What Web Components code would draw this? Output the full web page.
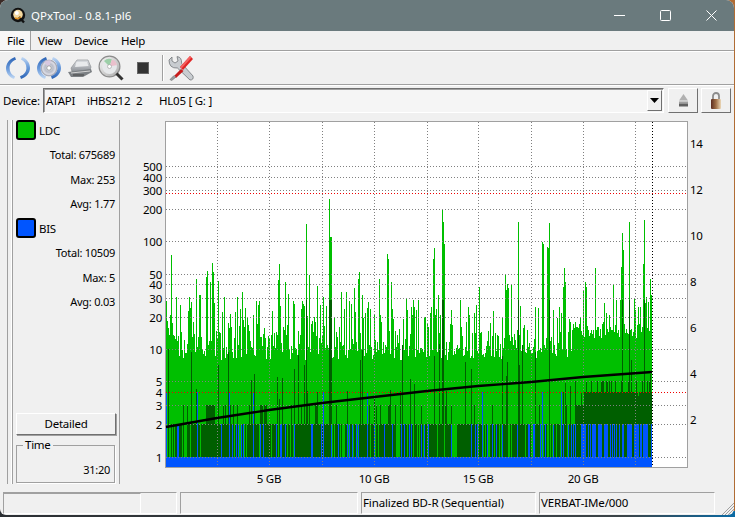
<!DOCTYPE html>
<html>
<head>
<meta charset="utf-8">
<title>QPxTool</title>
<style>
html, body { margin: 0; height: 100%; overflow: hidden; }
html { background: linear-gradient(90deg, #3a2a26, #4a5558 50%, #b06c34); }
body { background: linear-gradient(90deg, #2c3034 0, #3c4448 85%, #0a6aa4 100%) bottom / 100% 6px no-repeat; font: 11px "Noto Sans", sans-serif; color: #000; }
</style>
</head>
<body>
<qp-window>
    <qp-titlebar slot="top" text="QPxTool - 0.8.1-pl6"></qp-titlebar>
    <qp-menubar slot="top"></qp-menubar>
    <qp-toolbar slot="top"></qp-toolbar>
    <qp-devicebar slot="top"></qp-devicebar>
    <qp-sidepanel slot="side"></qp-sidepanel>
    <qp-chart slot="main"></qp-chart>
    <qp-statusbar slot="bottom"></qp-statusbar>
</qp-window>

<script>
const UI = 'font: 11px "Noto Sans", sans-serif; letter-spacing: -0.25px;'
const RAISED = 'border: 1px solid; border-color: #fff #707070 #707070 #fff;'

class Base extends HTMLElement {
    constructor () {
        super()
        this.root = this.attachShadow({ mode: 'open' })
    }
    connectedCallback () {
        this.root.innerHTML = this.render()
    }
}

customElements.define('qp-window', class extends Base {
    render () {
        return `<style>
        :host { display: flex; flex-direction: column; width: 734px; height: 515px; background: #f0f0f0; border-radius: 8px 8px 6px 6px; overflow: hidden; }
        .mid { flex: 1; display: flex; min-height: 0; }
        </style>
        <slot name="top"></slot>
        <div class="mid"><slot name="side"></slot><slot name="main"></slot></div>
        <slot name="bottom"></slot>`
    }
})

customElements.define('qp-titlebar', class extends Base {
    render () {
        return `<style>
        :host { display: flex; align-items: center; height: 31px; background: #6a7a7d; color: #fff; font: 11.5px "Noto Sans", sans-serif; }
        .ico { margin: 0 5px 0 10px; display: block; }
        .text { flex: 1; }
        .btn { width: 46px; height: 31px; display: flex; align-items: center; justify-content: center; }
        svg { display: block; }
        </style>
        <svg class="ico" width="16" height="17" viewBox="0 0 16 17">
            <circle cx="8" cy="8" r="7.2" fill="#111"/>
            <circle cx="8" cy="7.6" r="4.8" fill="#f4d9a0"/>
            <circle cx="6.8" cy="6" r="2" fill="#fff"/>
            <path d="M9 10 L14 15.5" stroke="#111" stroke-width="2.4"/>
            <path d="M5 11 Q8 12.5 11 10" stroke="#e09020" stroke-width="1.4" fill="none"/>
        </svg>
        <span class="text">${this.getAttribute('text')}</span>
        <div class="btn"><svg width="11" height="11"><path d="M0 5.5H11" stroke="#fff"/></svg></div>
        <div class="btn"><svg width="11" height="11"><rect x=".5" y=".5" width="10" height="10" rx="1" fill="none" stroke="#fff"/></svg></div>
        <div class="btn"><svg width="11" height="11"><path d="M.5 .5L10.5 10.5M10.5 .5L.5 10.5" stroke="#fff"/></svg></div>`
    }
})

customElements.define('qp-menubar', class extends Base {
    render () {
        return `<style>
        :host { display: flex; height: 19px; border-bottom: 1px solid #a0a0a0; box-shadow: 0 1px 0 #fff; background: #f0f0f0; ${UI} }
        span { flex: none; box-sizing: border-box; padding-left: 7px; line-height: 19px; font-size: 11.5px; }
        .on { width: 31px; background: #f7f7f7; border-right: 1px solid #a0a0a0; }
        </style>
        <span class="on">File</span><span style="width:36px">View</span><span style="width:47px">Device</span><span>Help</span>`
    }
})

customElements.define('qp-toolbar', class extends Base {
    arc (id) {
        return `<path d="M9 1 C3 3 0 8 0 12 C0 17 3 21 8 23 L9 20.5 C5.5 19 3.6 16 3.6 12 C3.6 8 6 5.2 10 3.8 Z" fill="url(#${id})"/>
        <path d="M9 1 C3 3 0 8 0 12 C0 17 3 21 8 23 L9 20.5 C5.5 19 3.6 16 3.6 12 C3.6 8 6 5.2 10 3.8 Z" fill="url(#${id})" transform="rotate(180 12 12)"/>`
    }
    render () {
        return `<style>
        :host { display: flex; align-items: center; height: 33px; margin-top: 1px; border-bottom: 1px solid #a0a0a0; box-shadow: 0 1px 0 #fff; background: #f0f0f0; padding-left: 6px; box-sizing: border-box; }
        svg { display: block; flex: none; }
        .sep { width: 1px; height: 26px; background: #a0a0a0; box-shadow: 1px 0 0 #fff; margin: 0 5px 0 13px; }
        </style>
        <svg width="0" height="0" style="position:absolute"><defs>
            <linearGradient id="a1" x1="0" y1="0" x2="0" y2="1"><stop offset="0" stop-color="#2a62b4"/><stop offset=".55" stop-color="#6c9cdc"/><stop offset="1" stop-color="#c4daf4"/></linearGradient>
            <radialGradient id="cd"><stop offset="0" stop-color="#f4f4f8"/><stop offset=".5" stop-color="#b8bcc8"/><stop offset=".8" stop-color="#dcdce4"/><stop offset="1" stop-color="#a0a4b0"/></radialGradient>
            <linearGradient id="tr" x1="0" y1="0" x2="0" y2="1"><stop offset="0" stop-color="#dfe2e6"/><stop offset="1" stop-color="#8a8e94"/></linearGradient>
            <linearGradient id="ls" x1="0" y1="0" x2="1" y2="1"><stop offset="0" stop-color="#f8f8f8"/><stop offset="1" stop-color="#a8a8a8"/></linearGradient>
        </defs></svg>
        <svg width="24" height="24" style="margin-right:7px">${this.arc('a1')}</svg>
        <svg width="24" height="24" style="margin-right:7px">
            <circle cx="12" cy="12" r="8" fill="url(#cd)" stroke="#9a9aa8" stroke-width=".6"/>
            <path d="M12 12 L7 6 A8 8 0 0 1 14 4.4 Z" fill="#d8c8e0"/>
            <circle cx="12" cy="12" r="2.2" fill="#fff" stroke="#777" stroke-width=".6"/>
            ${this.arc('a1')}
        </svg>
        <svg width="24" height="22" viewBox="0 0 24 22" style="margin-right:6px">
            <path d="M3 11 L9 3 L20 3 L23 10 L22 13 L4 15 Z" fill="url(#tr)" stroke="#84888c" stroke-width=".6"/>
            <path d="M8.5 5 L19 5 L20.5 9 L7 10 Z" fill="#e8eaec"/>
            <path d="M0 15 L23 12 L24 15 L15 20 L3 20 Z" fill="#7c8084"/>
            <path d="M3 16 L22 14" stroke="#d4d4d4"/>
            <path d="M5 18 L16 18" stroke="#444" stroke-width="1.2"/>
        </svg>
        <svg width="26" height="26" viewBox="0 0 26 26">
            <circle cx="11.5" cy="11.5" r="10.4" fill="url(#ls)" stroke="#8c8c8c" stroke-width="1.2"/>
            <circle cx="11.5" cy="11.5" r="7.4" fill="#e6e8ea"/>
            <path d="M11.5 11.5 L6 6 A7.6 7.6 0 0 1 14 4.4 Z" fill="#9ccfa8"/>
            <path d="M11.5 11.5 L14 4.4 A7.6 7.6 0 0 1 19 10 Z" fill="#eac0cc"/>
            <circle cx="11.5" cy="11.5" r="2" fill="#fff" stroke="#999" stroke-width=".6"/>
            <path d="M18.5 18.5 L24.5 24.5" stroke="#333" stroke-width="3"/>
        </svg>
        <svg width="12" height="12" style="margin-left:13px"><rect x=".5" y=".5" width="11" height="11" fill="#333" stroke="#666"/></svg>
        <div class="sep"></div>
        <svg width="26" height="26" viewBox="0 0 26 26">
            <path d="M1 5 L4 2 L4 6 L7 8 L10 6 L9 1.6 Q14 2 13.6 8.4 L25 21 Q26 25 22 25 L9.4 13 Q1 13.6 1 5Z" fill="#c8ccd0" stroke="#72767a" stroke-width=".8"/>
            <path d="M22 1 L25 4 L15 15 L12 12 Z" fill="#e02424"/>
            <path d="M22 1 L23.5 2.5 L13.5 13.5 L12 12 Z" fill="#f46060"/>
            <path d="M13 14 L6 21 L8 23 L15.5 16 Z" fill="#c81c1c"/>
            <path d="M6 20.5 L2 24.5 L3.6 25.6 L8 22" fill="#9a9ea2" stroke="#666" stroke-width=".6"/>
        </svg>`
    }
})

customElements.define('qp-devicebar', class extends Base {
    render () {
        return `<style>
        :host { display: flex; align-items: center; height: 31px; padding: 3px 3px 3px 3px; box-sizing: border-box; ${UI} font-size: 11.5px; }
        .lab { width: 40px; }
        .combo { width: 621px; height: 25px; box-sizing: border-box; border: 1px solid; border-color: #707070 #fff #fff #707070; box-shadow: inset 1px 1px 0 #a0a0a0; background: #f5f5f5; display: flex; align-items: center; padding-left: 2px; }
        .txt { flex: 1; display: flex; }
        .txt span { flex: none; }
        .arrow { width: 15px; height: 21px; box-sizing: border-box; background: #f0f0f0; ${RAISED} margin: 0 1px; display: flex; align-items: center; justify-content: center; }
        .btn { width: 30px; height: 25px; box-sizing: border-box; background: #f0f0f0; ${RAISED} display: flex; align-items: center; justify-content: center; }
        svg { display: block; }
        </style>
        <span class="lab">Device:</span>
        <div class="combo"><div class="txt"><span style="width:41px">ATAPI</span><span style="width:49px">iHBS212</span><span style="width:23px">2</span><span>HL05 [ G: ]</span></div>
            <div class="arrow"><svg width="9" height="5"><path d="M0 0H9L4.5 5Z" fill="#000"/></svg></div></div>
        <div class="btn" style="margin-left:4px"><svg width="11" height="13"><path d="M5.5 0L10 6.5H1Z" fill="#b0b0b0"/><rect x="1" y="7.5" width="9" height="2" fill="#a0a0a0"/><rect x="1" y="9.5" width="9" height="3" fill="#606060"/></svg></div>
        <div class="btn" style="margin-left:3px"><svg width="12" height="17">
            <defs><linearGradient id="lk"><stop offset="0" stop-color="#5c2c20"/><stop offset=".5" stop-color="#a07048"/><stop offset="1" stop-color="#ecd8b8"/></linearGradient></defs>
            <path d="M3 8V4a3 3 0 0 1 6 0V8" fill="none" stroke="#8c8c8c" stroke-width="1.8"/><rect x="1" y="7" width="10" height="10" rx="1" fill="url(#lk)"/></svg></div>`
    }
})

customElements.define('qp-legend', class extends Base {
    render () {
        return `<style>
        :host { display: flex; align-items: center; height: 20px; padding-left: 3px; font-size: 11.5px; }
        i { width: 20px; height: 20px; box-sizing: border-box; border: 2px solid #000; border-radius: 3px; background: ${this.getAttribute('color')}; margin-right: 3px; }
        </style><i></i><slot></slot>`
    }
})

customElements.define('qp-stat', class extends Base {
    render () {
        return `<style>
        :host { display: block; height: 24.5px; line-height: 24.5px; text-align: right; padding-right: 4px; }
        </style><slot></slot>`
    }
})

customElements.define('qp-sidepanel', class extends Base {
    render () {
        return `<style>
        :host { display: block; width: 113px; flex: none; margin: 4px 0 7px 7px; border-left: 1px solid #a0a0a0; ${UI} }
        .in { height: 100%; margin-left: 4px; border-left: 1px solid #a0a0a0; box-shadow: -1px 0 0 #fff; border-right: 1px solid #a0a0a0; box-sizing: border-box; display: flex; flex-direction: column; width: 108px; }
        .spc { flex: 1; }
        .stats { padding-top: 3px; height: 78px; box-sizing: border-box; }
        .det { height: 22px; margin: 0 3px 10px 3px; box-sizing: border-box; background: #f0f0f0; ${RAISED} box-shadow: 1px 1px 0 #a0a0a0; text-align: center; line-height: 20px; font-size: 11.5px; }
        .time { position: relative; height: 38px; margin: 0 4px 1px 3px; border: 1px solid #a0a0a0; box-sizing: border-box; box-shadow: 1px 1px 0 #fff; text-align: right; padding: 15px 4px 0 0; line-height: 18px; }
        .time b { position: absolute; left: 6px; top: -9px; font-weight: normal; font-size: 11.5px; background: #f0f0f0; padding: 0 2px; line-height: 16px; }
        </style>
        <div class="in">
            <qp-legend color="#00bf00">LDC</qp-legend>
            <div class="stats"><qp-stat>Total: 675689</qp-stat><qp-stat>Max: 253</qp-stat><qp-stat>Avg: 1.77</qp-stat></div>
            <qp-legend color="#0055ff">BIS</qp-legend>
            <div class="stats"><qp-stat>Total: 10509</qp-stat><qp-stat>Max: 5</qp-stat><qp-stat>Avg: 0.03</qp-stat></div>
            <div class="spc"></div>
            <div class="det">Detailed</div>
            <div class="time"><b>Time</b>31:20</div>
        </div>`
    }
})

// hand read peaks: [x, top y]
const PEAKS = [
    [34,405],[48,530],[88,530],[107,510],[109,478],[118,525],[121,525],[139,470],[142,453],[151,485],[157,430],[160,456],[174,483],[193,530],[232,530],[247,515],[355,480],[358,432],[376,486],[385,522],[438,312],[448,465],[472,497],[490,530],[507,237],[510,350],[513,350],[544,515],[558,515],[583,504],[595,476],[598,456],[607,525],[658,476],[682,402],[685,417],[694,486]
].map(p => [160 + p[0] / 3, 120 + p[1] / 3]).concat([
    [10,355],[18,355],[8,417],[35,405],[40,360],[43,380],[55,360],[75,410],[85,440],[91,400],[100,237],[103,205],[115,345],[121,405],[127,88],[130,127],[133,192],[154,390],[181,360],[184,440],[199,425],[208,425],[229,375],[238,320],[241,460],[271,430],[280,405],[286,460],[307,410],[316,283],[319,330],[322,312],[325,323],[334,312],[355,125],[373,435],[382,450],[415,385],[427,185],[430,192],[442,202],[445,205],[448,130],[460,390],[472,415],[484,400],[490,320],[493,265],[496,305],[517,450],[535,450],[541,410],[550,333],[556,305],[559,320],[586,264],[613,368],[619,400],[628,405],[640,312],[649,360],[661,360],[664,262],[667,160],[670,210],[688,127],[703,357],[706,390],[715,382],[721,380],[730,252],[733,120],[736,370],[739,350],[745,365],[751,297],[754,345]
].map(p => [400 + p[0] / 3, 180 + p[1] / 3]))

const CURVE = '166,427 217,418 269,410 322,403 374,397 427,391 478,386 531,382 583,377 652,372'

customElements.define('qp-chart', class extends Base {
    bars () {
        let seed = 1977
        const rnd = () => (seed = (seed * 16807) % 2147483647) / 2147483647
        const peaks = new Map(PEAKS.map(p => [Math.round(p[0]), p[1]]))
        const v = (x, a, b) => `M${x + 0.5} ${a}V${b}`
        let green = '', dark = '', blue = ''
        for (let x = 166; x < 652; x++) {
            const r = rnd()
            let top
            if (x < 400) {
                top = r < 0.3 ? 300 + rnd() * 22 : r < 0.7 ? 322 + rnd() * 28 : 345 + rnd() * 15
            } else if (x < 573) {
                top = r < 0.18 ? 305 + rnd() * 25 : r < 0.5 ? 330 + rnd() * 20 : 348 + rnd() * 12
            } else {
                top = 322 + rnd() * 16
            }
            if (peaks.has(x)) {
                top = Math.min(top, peaks.get(x))
            }
            green += v(x, Math.round(top), 457)

            // dark green: LDC levels 2 and 3
            const right = x >= 575
            const block = (x > 212 && x < 232) || (x > 314 && x < 330) || (x > 456 && x < 470)
            let dtop = 457
            if (rnd() < 0.68 || block) dtop = 424
            if (right) dtop = x > 583 ? 392 : 405
            else if (rnd() < 0.1 || (x > 205 && x < 215)) dtop = 405
            if (rnd() < 0.06) dtop = 340 + rnd() * 60
            if (right && rnd() < 0.3) dtop = 381
            if (peaks.has(x) && peaks.get(x) < 240) dtop = Math.min(dtop, 300)
            dark += v(x, Math.round(dtop), 457)

            // blue: BIS
            let btop = 457
            const p = x > 580 ? 0.6 : 0.13
            if (rnd() < p) btop = 424
            if (x < 580 && rnd() < 0.012) btop = 392
            if (btop < 457) blue += v(x, btop, 457)
        }
        return `<path d="${green}" stroke="#00bf00"/><path d="${dark}" stroke="#005f00"/><path d="${blue}" stroke="#0055ff"/>`
    }
    render () {
        const left = [[500,167],[400,177.5],[300,190.5],[200,209.5],[100,241.5],[50,274.5],[40,284.5],[30,298.5],[20,317.5],[10,349.5],[5,381.5],[4,392.5],[3,405.5],[2,424.5],[1,458]]
        const right = [[14,144],[12,190],[10,236],[8,282],[6,328],[4,374],[2,420]]
        const bottom = [['5 GB',269],['10 GB',374],['15 GB',478],['20 GB',583]]
        const vgrid = [217,269,322,374,427,478,531,583,635]
        const hgrid = [166,177,190,209,241,274,284,298,317,349,381,405,424,457]
        const hl = y => `M166 ${y + 0.5}H687`
        const vl = x => `M${x + 0.5} 122V467`
        return `<style>
        :host { display: block; flex: 1; }
        svg { display: block; }
        text { font: 11.5px "Noto Sans", sans-serif; letter-spacing: -0.25px; fill: #000; }
        </style>
        <svg width="613" height="374" viewBox="121 116 613 374">
            <rect x="165.5" y="121.5" width="522" height="346" fill="#fff" stroke="#a0a0a0"/>
            <g shape-rendering="crispEdges" fill="none">
                ${this.bars()}
                <rect x="166" y="457" width="486" height="10" fill="#0055ff"/>
                <path d="${vgrid.map(vl).join('')}" stroke="#808080" stroke-dasharray="1 2"/>
                <path d="${hgrid.map(hl).join('')}" stroke="#808080" stroke-dasharray="1 2"/>
                <path d="M652.5 122V467" stroke="#000" stroke-dasharray="1 2"/>
                <path d="M166 193.5H687M166 392.5H687" stroke="#f00000" stroke-dasharray="1 2"/>
            </g>
            <polyline points="${CURVE}" fill="none" stroke="#000" stroke-width="2.3"/>
            ${left.map(([t, y]) => `<text x="162" y="${y + 4}" text-anchor="end">${t}</text>`).join('')}
            ${right.map(([t, y]) => `<text x="690" y="${y + 4}">${t}</text>`).join('')}
            ${bottom.map(([t, x]) => `<text x="${x}" y="483" text-anchor="middle">${t}</text>`).join('')}
        </svg>`
    }
})

customElements.define('qp-statusbar', class extends Base {
    render () {
        return `<style>
        :host { display: flex; height: 24px; padding: 1px 0 1px 3px; box-sizing: border-box; position: relative; font: 11.5px "Noto Sans", sans-serif; letter-spacing: -0.12px; }
        .cell { box-sizing: border-box; height: 22px; border: 1px solid; border-color: #a0a0a0 #fff #fff #a0a0a0; line-height: 20px; padding-left: 1px; white-space: nowrap; overflow: hidden; margin-right: 3px; flex: none; }
        .first { padding: 0; display: flex; }
        .bar { width: 137px; border-top: 1px solid #a0a0a0; border-right: 1px solid #fff; box-sizing: border-box; height: 20px; }
        .grip { position: absolute; right: 0; bottom: 0; display: block; }
        </style>
        <div class="cell first" style="width:174px"><div class="bar"></div></div>
        <div class="cell" style="width:178px"></div>
        <div class="cell" style="width:175px">Finalized BD-R (Sequential)</div>
        <div class="cell" style="width:176px">VERBAT-IMe/000</div>
        <svg class="grip" width="13" height="13"><path d="M13 1L1 13M13 4L4 13M13 7L7 13M13 10L10 13" stroke="#a0a0a0"/></svg>`
    }
})
</script>
</body>
</html>
